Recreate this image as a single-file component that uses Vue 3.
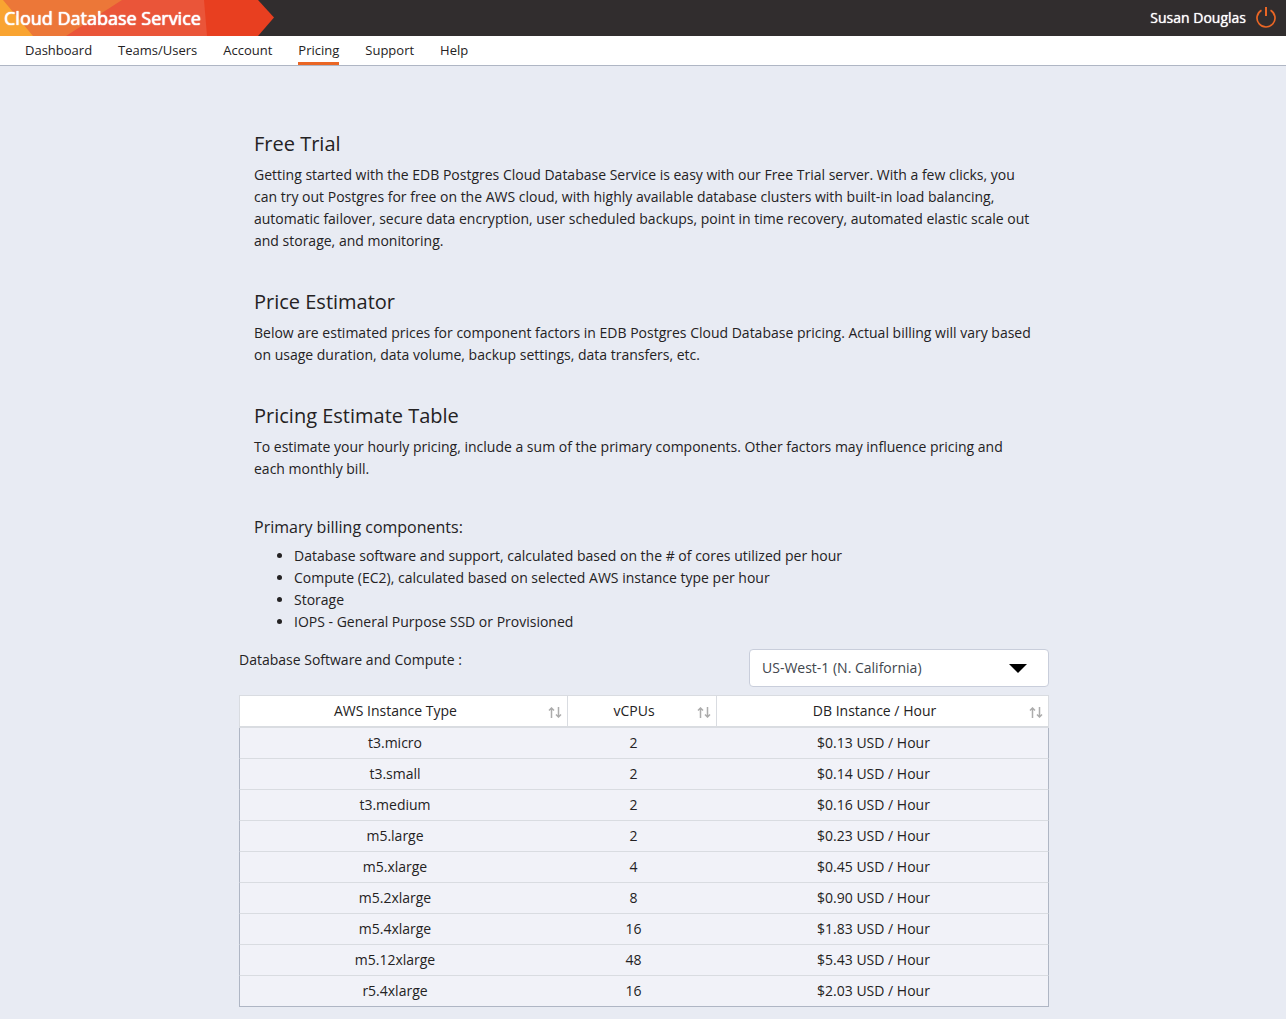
<script setup>
import { ref } from 'vue'

const links = ['Dashboard', 'Teams/Users', 'Account', 'Pricing', 'Support', 'Help']
const region = ref('US-West-1 (N. California)')
const columns = ['AWS Instance Type', 'vCPUs', 'DB Instance / Hour']
const rows = [
  ['t3.micro', 2, '0.13'],
  ['t3.small', 2, '0.14'],
  ['t3.medium', 2, '0.16'],
  ['m5.large', 2, '0.23'],
  ['m5.xlarge', 4, '0.45'],
  ['m5.2xlarge', 8, '0.90'],
  ['m5.4xlarge', 16, '1.83'],
  ['m5.12xlarge', 48, '5.43'],
  ['r5.4xlarge', 16, '2.03'],
]
</script>

<template>
  <div class="page">
    <header class="topbar">
      <div class="brand">
        <svg class="brand-art" viewBox="0 0 274 36" aria-hidden="true">
          <path d="M0 0H258L274 17.500L258 36H0Z" fill="#e83f20" />
          <path d="M0 0H204L207 36H0Z" fill="#ea5539" />
          <path d="M0 0H122L66 36H0Z" fill="#ec7738" />
          <path d="M0 0H3L33 36H0Z" fill="#f9a431" />
        </svg>
        <span class="brand-name">Cloud Database Service</span>
      </div>
      <div class="account">
        <span class="user">Susan Douglas</span>
        <button class="power" type="button" aria-label="Log out">
          <svg width="22" height="22" viewBox="0 0 22 22" fill="none" stroke="#ea6625">
            <path d="M6.500 3.200A9 9 0 1 0 15.500 3.200" stroke-width="1.700" />
            <path d="M11 0V9" stroke-width="2" />
          </svg>
        </button>
      </div>
    </header>

    <nav class="nav">
      <a v-for="l in links" :key="l" href="#" :class="{ active: l === 'Pricing' }">{{ l }}</a>
    </nav>

    <main class="content">
      <section class="block">
        <h2>Free Trial</h2>
        <p>Getting started with the EDB Postgres Cloud Database Service is easy with our Free Trial server. With a few clicks, you can try out Postgres for free on the AWS cloud, with highly available database clusters with built-in load balancing, automatic failover, secure data encryption, user scheduled backups, point in time recovery, automated elastic scale out and storage, and monitoring.</p>
      </section>
      <section class="block">
        <h2>Price Estimator</h2>
        <p>Below are estimated prices for component factors in EDB Postgres Cloud Database pricing. Actual billing will vary based on usage duration, data volume, backup settings, data transfers, etc.</p>
      </section>
      <section class="block">
        <h2>Pricing Estimate Table</h2>
        <p>To estimate your hourly pricing, include a sum of the primary components. Other factors may influence pricing and each monthly bill.</p>
      </section>
      <section class="block components">
        <h3>Primary billing components:</h3>
        <ul>
          <li>Database software and support, calculated based on the # of cores utilized per hour</li>
          <li>Compute (EC2), calculated based on selected AWS instance type per hour</li>
          <li>Storage</li>
          <li>IOPS - General Purpose SSD or Provisioned</li>
        </ul>
      </section>

      <div class="toolbar">
        <label for="region">Database Software and Compute :</label>
        <div class="select">
          <select id="region" v-model="region">
            <option>US-West-1 (N. California)</option>
          </select>
          <svg class="caret" width="18" height="9" viewBox="0 0 18 9" aria-hidden="true"><path d="M0 0H18L9 9Z" /></svg>
        </div>
      </div>

      <table>
        <colgroup>
          <col class="type" />
          <col class="cpu" />
          <col />
        </colgroup>
        <thead>
          <tr>
            <th v-for="c in columns" :key="c" scope="col">
              {{ c }}
              <svg class="sort" width="14" height="11" viewBox="0 0 14 11" fill="none" stroke="#acacac" aria-hidden="true">
                <path d="M3.500 11V1M1 3.500L3.500 1L6 3.500" stroke-width="1.500" />
                <path d="M10.500 0V10M8 7.500L10.500 10L13 7.500" stroke-width="1.500" />
              </svg>
            </th>
          </tr>
        </thead>
        <tbody>
          <tr v-for="r in rows" :key="r[0]">
            <td>{{ r[0] }}</td>
            <td>{{ r[1] }}</td>
            <td>${{ r[2] }} USD / Hour</td>
          </tr>
        </tbody>
      </table>
    </main>
  </div>
</template>

<style>
body {
  background: #e8ebf3;
}
</style>

<style scoped>
.page {
  box-sizing: border-box;
  min-height: 100vh;
  padding-bottom: 12px;
  background: #e8ebf3;
  color: #242223;
  font: 14px/22px "Open Sans", "Noto Sans", sans-serif;
}
.topbar {
  display: flex;
  justify-content: space-between;
  align-items: center;
  height: 36px;
  background: #312d2e;
  color: #fff;
}
.brand {
  display: grid;
  align-items: center;
}
.brand > * {
  grid-area: 1 / 1;
}
.brand-art {
  width: 274px;
  height: 36px;
}
.brand-name {
  z-index: 1;
  padding-left: 4px;
  font-size: 18px;
  text-shadow: 0 0 1px #fff, 0 0 1px #fff;
}
.account {
  display: flex;
  align-items: center;
  gap: 9px;
  padding-right: 9px;
}
.user {
  text-shadow: 0 0 1px #fff;
}
.power {
  display: flex;
  padding: 0;
  border: 0;
  background: none;
  cursor: pointer;
}
.nav {
  display: flex;
  gap: 26px;
  padding-left: 25px;
  height: 29px;
  background: #fff;
  border-bottom: 1px solid #afb6c4;
}
.nav a {
  box-sizing: border-box;
  height: 29px;
  padding-top: 3px;
  color: #242223;
  font-size: 13px;
  text-decoration: none;
}
.nav a.active {
  border-bottom: 3px solid #ea6625;
}
.content {
  box-sizing: border-box;
  max-width: 840px;
  margin: 0 auto;
  padding: 66px 14px 0 16px;
}
.block {
  padding: 0 15px;
  margin-bottom: 38px;
}
h2,
h3,
p,
ul {
  margin: 0;
}
h2 {
  margin-bottom: 8px;
  font-size: 20px;
  font-weight: 400;
  line-height: 24px;
}
h3 {
  margin-bottom: 9px;
  font-size: 16px;
  font-weight: 400;
  line-height: 18px;
}
ul {
  padding-left: 40px;
}
.components {
  margin-bottom: 16px;
}
.toolbar {
  display: flex;
  justify-content: space-between;
  margin-bottom: 8px;
}
.select {
  display: grid;
  align-items: center;
  width: 300px;
}
.select > * {
  grid-area: 1 / 1;
}
select {
  width: 100%;
  height: 38px;
  padding: 0 12px;
  border: 1px solid #c9cedb;
  border-radius: 4px;
  background: #fff;
  color: #41464d;
  font: inherit;
  appearance: none;
}
.caret {
  justify-self: end;
  margin-right: 22px;
  pointer-events: none;
}
table {
  width: 100%;
  table-layout: fixed;
  border-collapse: separate;
  border-spacing: 0;
  line-height: 20px;
  text-align: center;
}
.type {
  width: 329px;
}
.cpu {
  width: 149px;
}
th {
  position: relative;
  padding: 5px 16px 5px 0;
  background: #fff;
  border: 1px solid #d9dce1;
  border-width: 1px 1px 2px 0;
  font-weight: 500;
}
th:first-child {
  border-left-width: 1px;
}
.sort {
  position: absolute;
  right: 5px;
  top: 11px;
}
td {
  padding: 5px 18px 5px 0;
  background: #f1f2f8;
  border-bottom: 1px solid #d9dce1;
}
td:first-child {
  border-left: 1px solid #afb6c4;
}
td:last-child {
  border-right: 1px solid #afb6c4;
}
tbody tr:last-child td {
  border-bottom-color: #afb6c4;
}
</style>
